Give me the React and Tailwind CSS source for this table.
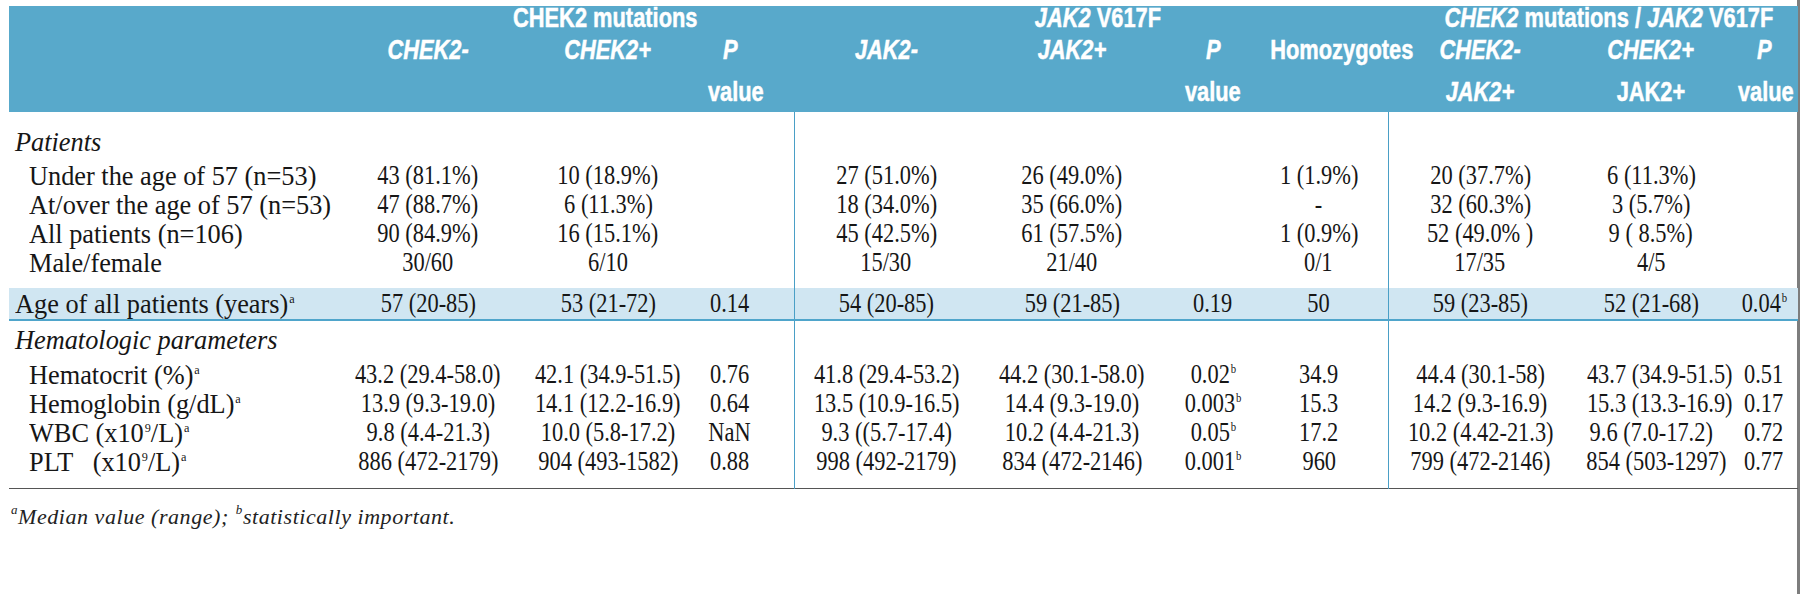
export default function App() {
  const serif = "font-['Liberation_Serif',serif]";

  // body column classes (label + 10 data columns)
  const cols = [
    "text-left",
    "text-center",
    "text-center",
    "text-center pr-[34px]",
    "text-center border-l border-[#4a9fc6]",
    "text-center",
    "text-center pl-[10px]",
    "text-center",
    "text-center border-l border-[#4a9fc6]",
    "text-center",
    "text-center",
  ];

  const Sup = ({ children }) => (
    <span className="relative -top-[10px] ml-[1px] text-[13px] leading-none">{children}</span>
  );

  // condensed header text
  const H = ({ children }) => <span className="inline-block scale-x-[0.78]">{children}</span>;

  const Row = ({ label, cells = [], pad = "", labelCls = "pl-[20px]", rowCls = "" }) => (
    <tr className={rowCls}>
      <td className={`${cols[0]} ${labelCls} ${pad} text-[28px] leading-[29px] p-0 whitespace-pre`}>
        <span className="inline-block origin-left scale-x-[0.94]">{label}</span>
      </td>
      {Array.from({ length: 10 }).map((_, i) => (
        <td key={i} className={`${cols[i + 1]} ${pad} text-[27px] leading-[29px] whitespace-pre`}>
          <span className="inline-block scale-x-[0.83]">{cells[i] ?? ""}</span>
        </td>
      ))}
    </tr>
  );

  const th = "p-0 text-center font-bold whitespace-nowrap";
  const r1 = `${th} leading-[20px]`;
  const r2 = `${th} leading-[44px]`;
  const r3 = `${th} leading-[40px]`;

  return (
    <div className="w-[1800px] h-[594px] bg-white border-r-[3px] border-[#7d7d7d] pt-[6px] pl-[9px]">
      <table className={`table-fixed w-[1789px] border-collapse border-b border-[#555] ${serif} text-[#161616]`}>
        <colgroup>
          <col className="w-[331px]" />
          <col className="w-[176px]" />
          <col className="w-[184px]" />
          <col className="w-[94px]" />
          <col className="w-[184px]" />
          <col className="w-[188px]" />
          <col className="w-[84px]" />
          <col className="w-[138px]" />
          <col className="w-[184px]" />
          <col className="w-[158px]" />
          <col className="w-[68px]" />
        </colgroup>

        {/* Header */}
        <thead className="bg-[#58a9cb] text-white font-['Liberation_Sans',sans-serif] text-[28px] [-webkit-text-stroke:0.5px_white]">
          <tr>
            <th className={`${r1} pt-[2px]`}></th>
            <th colSpan={3} className={`${r1} pt-[2px] pl-[76px]`}><H>CHEK2 mutations</H></th>
            <th colSpan={4} className={`${r1} pt-[2px] pl-[14px]`}>
              <H><i>JAK2</i> V617F</H>
            </th>
            <th colSpan={3} className={`${r1} pt-[2px] pl-[10px]`}>
              <H><i>CHEK2</i> mutations / <i>JAK2</i> V617F</H>
            </th>
          </tr>
          <tr>
            <th className={r2}></th>
            <th className={r2}><H><i>CHEK2-</i></H></th>
            <th className={r2}><H><i>CHEK2+</i></H></th>
            <th className={`${r2} pr-[34px]`}><H><i>P</i></H></th>
            <th className={r2}><H><i>JAK2-</i></H></th>
            <th className={r2}><H><i>JAK2+</i></H></th>
            <th className={`${r2} pl-[10px]`}><H><i>P</i></H></th>
            <th className={r2}><H>Homozygotes</H></th>
            <th className={r2}><H><i>CHEK2-</i></H></th>
            <th className={r2}><H><i>CHEK2+</i></H></th>
            <th className={r2}><H><i>P</i></H></th>
          </tr>
          <tr>
            <th className={r3}></th>
            <th className={r3}></th>
            <th className={r3}></th>
            <th className={`${r3} pr-[34px]`}><H>value</H></th>
            <th className={r3}></th>
            <th className={r3}></th>
            <th className={`${r3} pl-[10px]`}><H>value</H></th>
            <th className={r3}></th>
            <th className={r3}><H><i>JAK2+</i></H></th>
            <th className={r3}><H>JAK2+</H></th>
            <th className={r3}><H>value</H></th>
          </tr>
        </thead>

        <tbody>
          {/* Patients */}
          <Row label={<i>Patients</i>} labelCls="pl-[6px]" pad="pt-[15px] pb-[5px]" />
          <Row
            label="Under the age of 57 (n=53)"
            cells={["43 (81.1%)", "10 (18.9%)", "", "27 (51.0%)", "26 (49.0%)", "", "1 (1.9%)", "20 (37.7%)", "6 (11.3%)", ""]}
          />
          <Row
            label="At/over the age of 57 (n=53)"
            cells={["47 (88.7%)", "6 (11.3%)", "", "18 (34.0%)", "35 (66.0%)", "", "-", "32 (60.3%)", "3 (5.7%)", ""]}
          />
          <Row
            label="All patients (n=106)"
            cells={["90 (84.9%)", "16 (15.1%)", "", "45 (42.5%)", "61 (57.5%)", "", "1 (0.9%)", "52 (49.0% )", "9 ( 8.5%)", ""]}
          />
          <Row
            label="Male/female"
            pad="pb-[11px]"
            cells={["30/60", "6/10", "", "15/30", "21/40", "", "0/1", "17/35", "4/5", ""]}
          />

          {/* Age row */}
          <Row
            rowCls="bg-[#d0e6f2] border-b-2 border-[#4fa5cb]"
            labelCls="pl-[6px]"
            pad="pt-[1px] pb-[1px]"
            label={<>Age of all patients (years)<Sup>a</Sup></>}
            cells={[
              "57 (20-85)", "53 (21-72)", "0.14", "54 (20-85)", "59 (21-85)", "0.19", "50",
              "59 (23-85)", "52 (21-68)", <>0.04<Sup>b</Sup></>,
            ]}
          />

          {/* Hematologic parameters */}
          <Row label={<i>Hematologic parameters</i>} labelCls="pl-[6px]" pad="pt-[4px] pb-[6px]" />
          <Row
            label={<>Hematocrit (%)<Sup>a</Sup></>}
            cells={[
              "43.2 (29.4-58.0)", "42.1 (34.9-51.5)", "0.76", "41.8 (29.4-53.2)", "44.2 (30.1-58.0)",
              <>0.02<Sup>b</Sup></>, "34.9", "44.4 (30.1-58)", "43.7 (34.9-51.5)", "0.51",
            ]}
          />
          <Row
            label={<>Hemoglobin (g/dL)<Sup>a</Sup></>}
            cells={[
              "13.9 (9.3-19.0)", "14.1 (12.2-16.9)", "0.64", "13.5 (10.9-16.5)", "14.4 (9.3-19.0)",
              <>0.003<Sup>b</Sup></>, "15.3", "14.2 (9.3-16.9)", "15.3 (13.3-16.9)", "0.17",
            ]}
          />
          <Row
            label={<>WBC (x10<Sup>9</Sup>/L)<Sup>a</Sup></>}
            cells={[
              "9.8 (4.4-21.3)", "10.0 (5.8-17.2)", "NaN", "9.3 ((5.7-17.4)", "10.2 (4.4-21.3)",
              <>0.05<Sup>b</Sup></>, "17.2", "10.2 (4.42-21.3)", "9.6 (7.0-17.2)", "0.72",
            ]}
          />
          <Row
            label={<>PLT   (x10<Sup>9</Sup>/L)<Sup>a</Sup></>}
            pad="pb-[12px]"
            cells={[
              "886 (472-2179)", "904 (493-1582)", "0.88", "998 (492-2179)", "834 (472-2146)",
              <>0.001<Sup>b</Sup></>, "960", "799 (472-2146)", "854 (503-1297)", "0.77",
            ]}
          />
        </tbody>
      </table>

      {/* Footnote */}
      <p className={`${serif} italic text-[22px] text-[#222] mt-[11px] ml-[1px] tracking-[0.025em]`}>
        <Sup>a</Sup>Median value (range); <Sup>b</Sup>statistically important.
      </p>
    </div>
  );
}
